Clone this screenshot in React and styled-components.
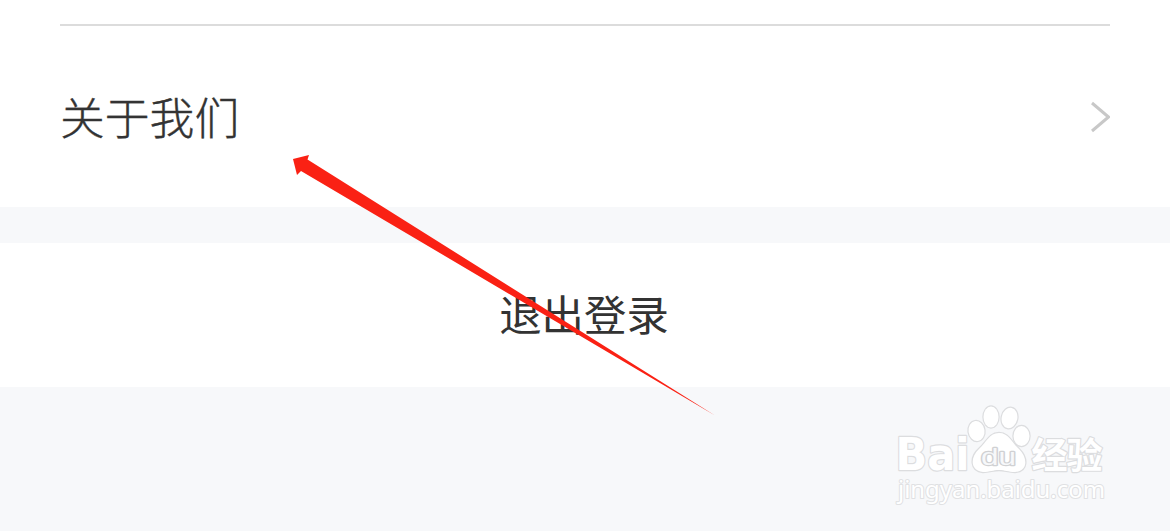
import React from "react";
import styled, { createGlobalStyle } from "styled-components";

const GlobalStyle = createGlobalStyle`
  * { box-sizing: border-box; }
  body { margin: 0; background: #f7f8fa; }
`;

const Page = styled.main`
  position: relative;
  display: flex;
  flex-direction: column;
  width: 1170px;
  height: 531px;
  overflow: hidden;
  background: #f7f8fa;
  color: #333;
  font-family: "Noto Sans CJK SC", sans-serif;
`;

const Section = styled.section`
  height: 207px;
  padding: 24px 60px 0;
  background: #fff;
`;

const Divider = styled.hr`
  height: 2px;
  margin: 0;
  border: 0;
  background: #dcdcdc;
`;

const Row = styled.div`
  display: flex;
  align-items: center;
  justify-content: space-between;
  height: 181px;
`;

const Label = styled.span`
  padding-bottom: 2px;
  font-size: 44.8px;
  font-weight: 300;
  line-height: 60px;
  -webkit-text-stroke: 0.4px #333;
`;

const Chevron = styled.svg`
  display: block;
  width: 22px;
  height: 34px;
`;

const LogoutButton = styled.button`
  display: flex;
  align-items: center;
  justify-content: center;
  height: 144px;
  margin-top: 36px;
  padding: 0 2px 4px 0;
  border: 0;
  background: #fff;
  color: #333;
  font: 400 42.4px/60px "Noto Sans CJK SC", sans-serif;
`;

const Pointer = styled.svg`
  position: absolute;
  left: 0;
  top: 0;
  pointer-events: none;
`;

const Watermark = styled.svg`
  position: absolute;
  left: 890px;
  top: 395px;
  fill: #fff;
  stroke: #dcdddf;
  stroke-width: 2.4px;
  stroke-linejoin: round;
  paint-order: stroke;
`;

const Brand = styled.text`
  font: 700 45px "DejaVu Sans", sans-serif;
`;

const BrandInner = styled.text`
  font: 400 24px "Liberation Sans", sans-serif;
  fill: #f7f8fa;
  stroke: #d0d1d3;
`;

const BrandChinese = styled.text`
  font: 700 36px "Noto Sans CJK SC", sans-serif;
`;

const Domain = styled.text`
  font: 400 23.5px "Noto Sans", sans-serif;
  stroke: #e0e1e3;
  stroke-width: 2px;
`;

export default function App() {
  return (
    <Page>
      <GlobalStyle />
      <Section>
        <Divider />
        <Row>
          <Label>关于我们</Label>
          <Chevron viewBox="0 0 22 34" fill="none" stroke="#c8c8c8" strokeWidth="3">
            <path d="M4 3 20.5 17 4 31" />
          </Chevron>
        </Row>
      </Section>
      <LogoutButton>退出登录</LogoutButton>
      <Watermark width="230" height="120" viewBox="0 0 230 120">
        <Brand x="5.5" y="74.5" textLength="74" lengthAdjust="spacingAndGlyphs">Bai</Brand>
        <ellipse cx="86.5" cy="36" rx="8" ry="10" transform="rotate(-8 86.5 36)" />
        <ellipse cx="101" cy="22" rx="7.5" ry="10.5" />
        <ellipse cx="119.5" cy="23" rx="7.8" ry="10.3" transform="rotate(12 119.5 23)" />
        <ellipse cx="131.5" cy="41" rx="8" ry="10" />
        <path d="M109 38C99 38 97 47 89 54C80 62 80 76 93 77C100 77 103 75 109 75C115 75 118 77 125 77C138 76 138 63 129 54C121 47 119 38 109 38Z" />
        <BrandInner x="91" y="69.5" textLength="35" lengthAdjust="spacingAndGlyphs">du</BrandInner>
        <BrandChinese x="141.5" y="74" textLength="71">经验</BrandChinese>
        <Domain x="8" y="103" textLength="207" lengthAdjust="spacingAndGlyphs">jingyan.baidu.com</Domain>
      </Watermark>
      <Pointer width="1170" height="531" viewBox="0 0 1170 531" aria-hidden="true">
        <path fill="#fa2114" d="M293 159 309 155 307.5 159.5 715 415.5 301 171 297 175Z" />
      </Pointer>
    </Page>
  );
}
